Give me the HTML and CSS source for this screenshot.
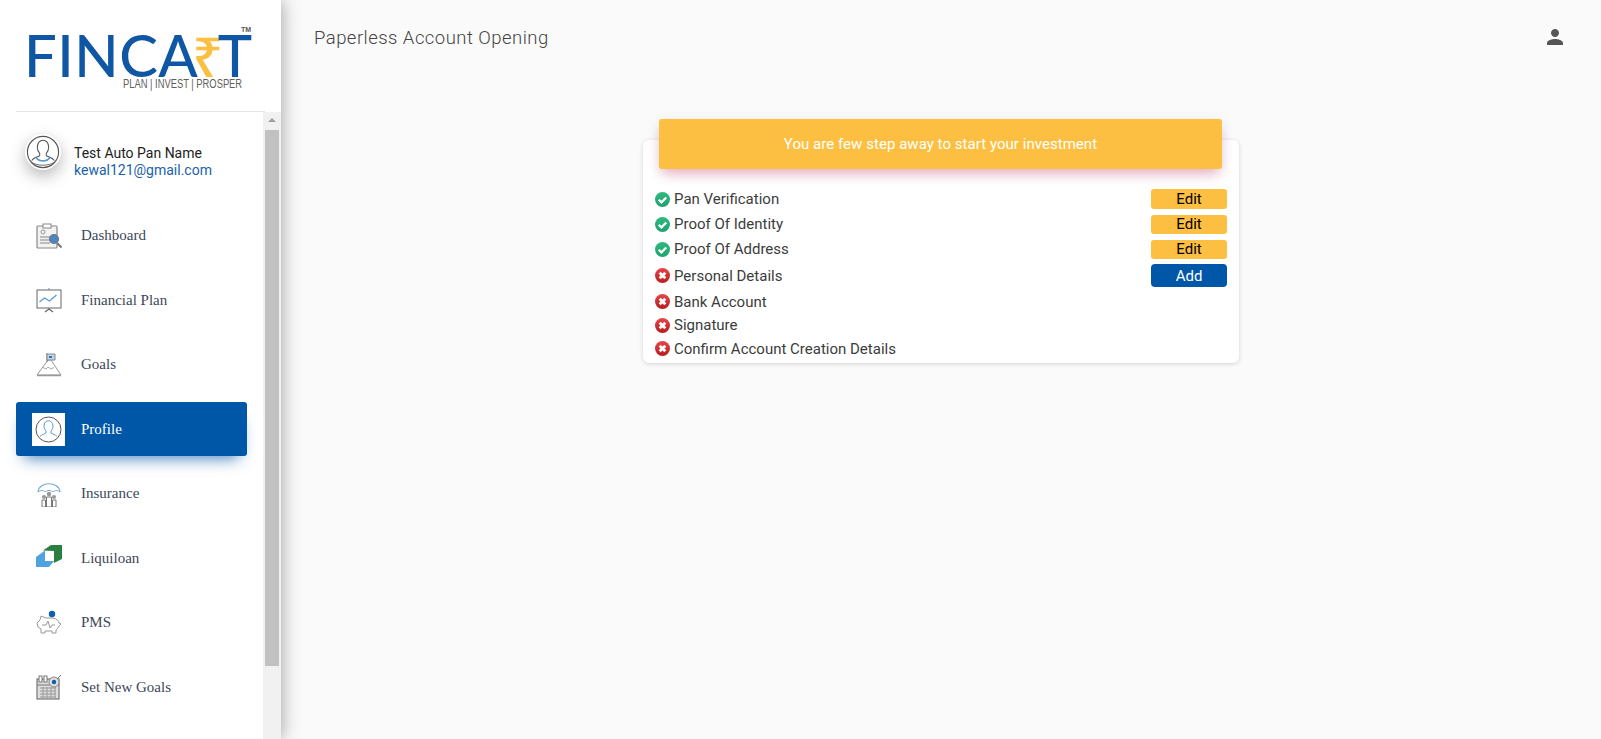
FILE: index.html
```html
<!DOCTYPE html>
<html lang="en">
<head>
<meta charset="utf-8">
<title>Paperless Account Opening</title>
<link rel="stylesheet" href="styles.css">
</head>
<body>
<div class="app">
  <aside class="sidebar">
    <div class="logo-wrap">
      <div class="logo">
        <span class="logo-tm">TM</span>
        <div class="logo-word">FINCA<span class="logo-rupee">₹</span>T</div>
        <div class="logo-tag">PLAN | INVEST | PROSPER</div>
      </div>
    </div>
    <div class="side-body">
      <div class="side-scroll">
        <div class="user">
          <span class="avatar">
            <svg viewBox="0 0 36 36" width="34" height="34"><circle cx="18" cy="18" r="16.500" fill="#fff" stroke="#555" stroke-width="1.200"/><path d="M12 13c0-10 12-10 12 0 0 3-1 5-2.500 6.500v2.500c3 1.500 6.500 2 8.500 5M12 13c0 3 1 5 2.500 6.500v2.500c-3 1.500-6.500 2-8.500 5" fill="none" stroke="#555" stroke-width="1.100"/><path d="M11 24c3 4.500 11 4.500 14 0" fill="none" stroke="#5b9bd5" stroke-width="1.800"/><path d="M6 29c6 4 18 4 24 0" fill="none" stroke="#666" stroke-width="1"/></svg>
          </span>
          <div class="user-text">
            <div class="user-name">Test Auto Pan Name</div>
            <div class="user-mail">kewal121@gmail.com</div>
          </div>
        </div>
        <nav class="nav">
          <a class="nav-item"><span class="nav-icon">
            <svg viewBox="0 0 26 26" width="26" height="26"><rect x="1" y="3" width="20" height="22" rx="1" fill="#f2f2f2" stroke="#888" stroke-width="1.200"/><rect x="7" y="1" width="8" height="4" fill="#fff" stroke="#888"/><circle cx="7" cy="9" r="2" fill="none" stroke="#999"/><path d="M4 14h11M4 17h9M4 20h10" stroke="#aaa" stroke-width="1.600"/><circle cx="18" cy="16" r="4.500" fill="#4a86c5" stroke="#777" stroke-width="1.200"/><path d="M21 20l4.500 4.500" stroke="#777" stroke-width="2"/></svg>
          </span><span class="nav-label">Dashboard</span></a>
          <a class="nav-item"><span class="nav-icon">
            <svg viewBox="0 0 26 26" width="26" height="26"><rect x="1" y="3" width="24" height="18" fill="#fff" stroke="#666"/><path d="M13 1v2" stroke="#888"/><path d="M3.500 15l5-4 5 3 7-6" fill="none" stroke="#5b9bd5" stroke-width="1.300"/><path d="M13 21v2M9 25l4-3 4 3" fill="none" stroke="#666" stroke-width="1.200"/></svg>
          </span><span class="nav-label">Financial Plan</span></a>
          <a class="nav-item"><span class="nav-icon">
            <svg viewBox="0 0 26 26" width="26" height="26"><path d="M1 23L12 8l3 0 10 15z" fill="#fff" stroke="#999"/><path d="M7 15.500l3 1.500 2-2 3 2 3-1.500" fill="none" stroke="#aaa"/><path d="M1 23.500h24" stroke="#999" stroke-width="1.500"/><path d="M11 10V1" stroke="#777"/><path d="M11 2h8v6h-8z" fill="#bcd4ec" stroke="#888"/><rect x="13" y="4" width="3" height="2" fill="#2f72b8"/></svg>
          </span><span class="nav-label">Goals</span></a>
          <a class="nav-item is-active"><span class="nav-icon nav-icon-box">
            <svg viewBox="0 0 33 33" width="33" height="33"><circle cx="16.500" cy="16.500" r="12.500" fill="none" stroke="#555"/><path d="M12 13c0-7 9-7 9 0 0 2-1 4-2 5v2c2 1 4 1.500 6 3.500M12 13c0 2 1 4 2 5v2c-2 1-4 1.500-6 3.500" fill="none" stroke="#5b9bd5"/></svg>
          </span><span class="nav-label">Profile</span></a>
          <a class="nav-item"><span class="nav-icon">
            <svg viewBox="0 0 26 26" width="26" height="26"><path d="M2 11C3 0 23 0 24 11" fill="none" stroke="#7aa8d8" stroke-width="1.100"/><path d="M2 11c3-2 5-2 7 0 2-2 6-2 8 0 2-2 5-2 7 0" fill="none" stroke="#7aa8d8"/><circle cx="13" cy="13" r="2.200" fill="#999"/><circle cx="8" cy="16" r="2" fill="#999"/><circle cx="18" cy="16" r="2" fill="#999"/><path d="M10.500 26v-10h5v10zM6 26v-7h3.500v7zM16.500 26v-7H20v7z" fill="#fff" stroke="#777"/></svg>
          </span><span class="nav-label">Insurance</span></a>
          <a class="nav-item"><span class="nav-icon">
            <svg viewBox="0 0 26 26" width="26" height="26"><path d="M7 5.500L15 0h11v14l-8 4V6z" fill="#2a8040"/><path d="M0 12l9-6.500V16h9l-5 6H0z" fill="#4fa3e0"/></svg>
          </span><span class="nav-label">Liquiloan</span></a>
          <a class="nav-item"><span class="nav-icon">
            <svg viewBox="0 0 26 26" width="26" height="26"><path d="M1 13l3-3 1-4 5 2h7c4 1 6 3 6 5l2 1-2 2c-1 2-2 3-3 4v3h-4v-2H9v2H5v-4l-3-2z" fill="#fff" stroke="#999"/><path d="M6 15h4l2-4 2 7 2-3h3" fill="none" stroke="#999"/><circle cx="16" cy="4" r="3.200" fill="#0f5fae"/></svg>
          </span><span class="nav-label">PMS</span></a>
          <a class="nav-item"><span class="nav-icon">
            <svg viewBox="0 0 26 26" width="26" height="26"><rect x="1" y="5" width="22" height="20" fill="#ddd" stroke="#777" stroke-width="1.200"/><path d="M1 11h22" stroke="#777"/><rect x="3" y="2" width="3" height="6" fill="#fff" stroke="#777"/><rect x="8" y="2" width="3" height="6" fill="#fff" stroke="#777"/><path d="M4 14h16M4 17h16M4 20h16M4 23h16M7 13v11M11 13v11M15 13v11M19 13v11" stroke="#999"/><circle cx="18" cy="8" r="5" fill="#ddd" stroke="#888"/><circle cx="18" cy="8" r="2.200" fill="#0f5fae"/><path d="M21 5l4-4" stroke="#777"/></svg>
          </span><span class="nav-label">Set New Goals</span></a>
        </nav>
      </div>
      <div class="scrollbar">
        <span class="scroll-arrow"></span>
        <span class="scroll-thumb"></span>
      </div>
    </div>
  </aside>
  <main class="main">
    <header class="topbar">
      <h1 class="page-title">Paperless Account Opening</h1>
      <svg class="person" viewBox="0 0 24 24" width="24" height="24"><path d="M12 12c2.210 0 4-1.790 4-4s-1.790-4-4-4-4 1.790-4 4 1.790 4 4 4zm0 2c-2.670 0-8 1.340-8 4v2h16v-2c0-2.660-5.330-4-8-4z"/></svg>
    </header>
    <section class="card">
      <div class="banner">You are few step away to start your investment</div>
      <ul class="steps">
        <li class="step">
          <span class="step-name"><span class="status status-ok"><svg viewBox="0 0 16 16"><path d="M4 8.200l2.800 2.800 5.200-5.200" fill="none" stroke="#fff" stroke-width="2.400"/></svg></span>Pan Verification</span>
          <button class="btn btn-edit btn-h20">Edit</button>
        </li>
        <li class="step">
          <span class="step-name"><span class="status status-ok"><svg viewBox="0 0 16 16"><path d="M4 8.200l2.800 2.800 5.200-5.200" fill="none" stroke="#fff" stroke-width="2.400"/></svg></span>Proof Of Identity</span>
          <button class="btn btn-edit">Edit</button>
        </li>
        <li class="step">
          <span class="step-name"><span class="status status-ok"><svg viewBox="0 0 16 16"><path d="M4 8.200l2.800 2.800 5.200-5.200" fill="none" stroke="#fff" stroke-width="2.400"/></svg></span>Proof Of Address</span>
          <button class="btn btn-edit">Edit</button>
        </li>
        <li class="step step-last-btn">
          <span class="step-name"><span class="status status-bad"><svg viewBox="0 0 16 16"><path d="M5 5l6 6M11 5l-6 6" stroke="#fff" stroke-width="3"/></svg></span>Personal Details</span>
          <button class="btn btn-add">Add</button>
        </li>
        <li class="step step-plain">
          <span class="step-name"><span class="status status-bad"><svg viewBox="0 0 16 16"><path d="M5 5l6 6M11 5l-6 6" stroke="#fff" stroke-width="3"/></svg></span>Bank Account</span>
        </li>
        <li class="step step-plain">
          <span class="step-name"><span class="status status-bad"><svg viewBox="0 0 16 16"><path d="M5 5l6 6M11 5l-6 6" stroke="#fff" stroke-width="3"/></svg></span>Signature</span>
        </li>
        <li class="step step-plain">
          <span class="step-name"><span class="status status-bad"><svg viewBox="0 0 16 16"><path d="M5 5l6 6M11 5l-6 6" stroke="#fff" stroke-width="3"/></svg></span>Confirm Account Creation Details</span>
        </li>
      </ul>
    </section>
  </main>
</div>
</body>
</html>
```
FILE: styles.css
```css
* { box-sizing: border-box; }
html, body { margin: 0; height: 100%; overflow: hidden; }
body { font-family: Roboto, "Liberation Sans", sans-serif; background: #fafafa; color: #3c4858; }

.app { display: flex; height: 739px; }

/* sidebar */
.sidebar {
  width: 281px; flex: none; background: #fff; display: flex; flex-direction: column;
  box-shadow: 0 0 18px rgba(0,0,0,.38); position: relative; z-index: 2;
}
.logo-wrap { height: 112px; margin-left: 16px; margin-right: 16px; border-bottom: 1px solid #e4e4e4; flex: none; padding-left: 8px; padding-top: 34px; }
.logo { position: relative; width: 226px; height: 66px; }
.logo-word { font-family: Lato, "Noto Sans", sans-serif; font-size: 58px; line-height: 42px; height: 42px; color: #0f57a5; font-weight: 500; letter-spacing: .5px; white-space: nowrap; }
.logo-rupee { color: #fbbf42; font-family: "Noto Sans", "DejaVu Sans", sans-serif; margin: 0 -6px; font-size: 54px; line-height: 42px; }
.logo-tag { position: absolute; left: 99px; top: 45px; font-size: 12px; line-height: 11px; font-weight: 400; color: #5f5f5f; white-space: nowrap; font-family: "Liberation Sans", sans-serif; transform: scaleX(.78); transform-origin: left center; }
.logo-tm { position: absolute; right: -1px; top: -8px; font-size: 7px; line-height: 8px; color: #555; font-family: "Liberation Sans", sans-serif; font-weight: 700; }

.side-body { flex: 1; display: flex; min-height: 0; }
.side-scroll { flex: 1; min-width: 0; }
.scrollbar { width: 18px; background: #f1f1f1; padding: 0 2px; flex: none; display: flex; flex-direction: column; align-items: stretch; }
.scroll-arrow { height: 18px; flex: none; position: relative; }
.scroll-arrow::before { content: ""; position: absolute; left: 3px; top: 6px; border-left: 4px solid transparent; border-right: 4px solid transparent; border-bottom: 4px solid #a0a0a0; }
.scroll-thumb { height: 536px; background: #c1c1c1; flex: none; }

.user { display: flex; align-items: center; height: 80.750px; padding: 0 0 0 25px; margin-bottom: 16px; }
.avatar { width: 36px; height: 36px; border-radius: 50%; background: #fff; box-shadow: 0 6px 16px rgba(0,0,0,.28); margin-right: 13px; flex: none; display: block; border: 1px solid #fff; overflow: hidden; }
.avatar svg { display: block; }
.user-text { font-size: 14px; line-height: 17.500px; margin-top: 20px; }
.user-name { color: #222; }
.user-mail { color: #1a62ab; }

.nav { display: flex; flex-direction: column; gap: 10.500px; padding-left: 16px; width: 247px; }
.nav-item { display: flex; align-items: center; height: 54px; padding-left: 20px; border-radius: 3px; font-family: "Liberation Serif", serif; font-size: 15px; color: #3c4858; }
.nav-icon { width: 26px; height: 26px; flex: none; margin-right: 19px; display: block; }
.nav-icon svg { display: block; }
.nav-icon-box { width: 33px; height: 33px; margin-left: -4px; margin-right: 16px; background: #fff; }
.is-active { background: #0056a7; color: #fff; box-shadow: 0 10px 16px -8px rgba(0,86,167,.75); }

/* main */
.main { flex: 1; min-width: 0; display: flex; flex-direction: column; align-items: center; }
.topbar { width: 100%; height: 119px; flex: none; display: flex; justify-content: space-between; align-items: flex-start; padding: 26px 34px 0 33px; }
.page-title { margin: 0; font-size: 18.500px; line-height: 24px; font-weight: 300; color: #444; letter-spacing: .46px; }
.person { fill: #555; margin-top: -1px; }

.card { width: 596px; height: 223px; margin-top: 21px; background: #fff; border-radius: 6px; box-shadow: 0 1px 4px rgba(0,0,0,.16); padding: 0 12px; }
.banner { width: 563px; height: 50px; margin: -21px 0 20px 4px; background: #fdbf41; color: #fff; border-radius: 3px; font-size: 15px; font-weight: 400; letter-spacing: .04px; display: flex; align-items: center; justify-content: center; box-shadow: 0 8px 12px -4px rgba(233,30,99,.3), 0 4px 14px rgba(0,0,0,.1); }
.steps { list-style: none; margin: 0; padding: 0; }
.step { display: flex; justify-content: space-between; align-items: center; margin-bottom: 5.750px; font-size: 15px; color: #3c3c3c; }
.step-last-btn { margin-bottom: 3px; }
.step-plain { margin: 0; height: 23.400px; }
.step-name { display: flex; align-items: center; }
.status { width: 15px; height: 15px; margin-right: 4px; flex: none; border-radius: 50%; display: block; }
.status svg { display: block; }
.status-ok { background: linear-gradient(#2fb87f, #1ea36e); }
.status-bad { background: linear-gradient(#e8454a, #b81c20); }
.btn { width: 76px; height: 19px; padding: 0; border: 0; border-radius: 3px; font: 400 15px/19px Roboto, sans-serif; text-align: center; display: block; }
.btn-h20 { height: 20px; }
.btn-edit { background: #fdbf41; color: #000; }
.btn-add { background: #0056a7; color: #fff; height: 23px; border-radius: 4px; padding-top: 1px; }
```
